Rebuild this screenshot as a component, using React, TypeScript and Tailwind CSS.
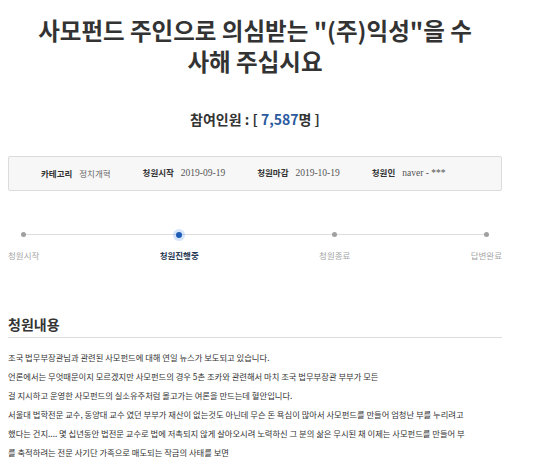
import React from "react";

const steps = [
  { label: "청원시작", active: false },
  { label: "청원진행중", active: true },
  { label: "청원종료", active: false },
  { label: "답변완료", active: false },
];

const body = [
  "조국 법무부장관님과 관련된 사모펀드에 대해 연일 뉴스가 보도되고 있습니다.",
  "언론에서는 무엇때문이지 모르겠지만 사모펀드의 경우 5촌 조카와 관련해서 마치 조국 법무부장관 부부가 모든",
  "걸 지시하고 운영한 사모펀드의 실소유주처럼 몰고가는 여론을 만드는데 혈안입니다.",
  "서울대 법학전문 교수, 동양대 교수 였던 부부가 재산이 없는것도 아닌데 무슨 돈 욕심이 많아서 사모펀드를 만들어 엄청난 부를 누리려고",
  "했다는 건지.... 몇 십년동안 법전문 교수로 법에 저촉되지 않게 살아오시려 노력하신 그 분의 삶은 무시된 채 이제는 사모펀드를 만들어 부",
  "를 축적하려는 전문 사기단 가족으로 매도되는 작금의 사태를 보면",
];

function Info({ label, value, serif }: { label: string; value: string; serif?: boolean }) {
  return (
    <div className="flex items-baseline gap-[7px]">
      <span className="font-bold text-[#333]">{label}</span>
      <span className={serif ? "font-['Liberation_Serif',serif] text-[9.5px] text-[#555]" : "text-[#666]"}>{value}</span>
    </div>
  );
}

export default function App() {
  return (
    <div className="h-[457px] w-[560px] overflow-hidden bg-white font-['Noto_Sans_CJK_KR','Noto_Sans',sans-serif] text-[#333]">
      <div className="ml-2 w-[494px]">
        <h1 className="pt-[15px] text-center text-[23.5px] font-bold leading-[31px] text-[#333]">
          사모펀드 주인으로 의심받는 "(주)익성"을 수<br />사해 주십시요
        </h1>

        <div className="mt-[32px] text-center text-[14px] font-bold leading-[20px]">
          참여인원 : [ <span className="text-[#2b5a9e]">7,587</span>명 ]
        </div>

        <div className="mt-[27px] flex h-[35px] items-center gap-[32px] rounded-[2px] border border-[#dcdcdc] bg-[#f7f7f7] pl-[32px] text-[8.5px]">
          <Info label="카테고리" value="정치개혁" />
          <Info label="청원시작" value="2019-09-19" serif />
          <Info label="청원마감" value="2019-10-19" serif />
          <Info label="청원인" value="naver - ***" serif />
        </div>

        <div className="relative mt-[39px]">
          <div className="absolute left-[16px] right-[16px] top-[4px] h-px bg-[#ddd]" />
          <div className="relative flex justify-between">
            {steps.map((s) => (
              <div key={s.label} className="flex flex-col items-center">
                <div className="flex h-[9px] items-center justify-center">
                  {s.active ? (
                    <span className="h-[6px] w-[6px] rounded-full bg-[#1d5db5] shadow-[0_0_0_3px_rgba(90,150,230,0.25)]" />
                  ) : (
                    <span className="h-[5px] w-[5px] rounded-full bg-[#a0a0a0]" />
                  )}
                </div>
                <span
                  className={
                    s.active
                      ? "mt-[9px] text-[8.5px] font-bold leading-[14px] text-[#2a3b55]"
                      : "mt-[9px] text-[8.5px] leading-[14px] text-[#a5a5a5]"
                  }
                >
                  {s.label}
                </span>
              </div>
            ))}
          </div>
        </div>

        <h2 className="mt-[52px] text-[14px] font-bold leading-[20px] text-[#333]">청원내용</h2>
        <div className="mt-[3px] h-px bg-[#dcdcdc]" />
        <div className="mt-[10px] text-[8.3px] leading-[19px] text-[#333]">
          {body.map((l) => (
            <div key={l} className="whitespace-nowrap">
              {l}
            </div>
          ))}
        </div>
      </div>
    </div>
  );
}
